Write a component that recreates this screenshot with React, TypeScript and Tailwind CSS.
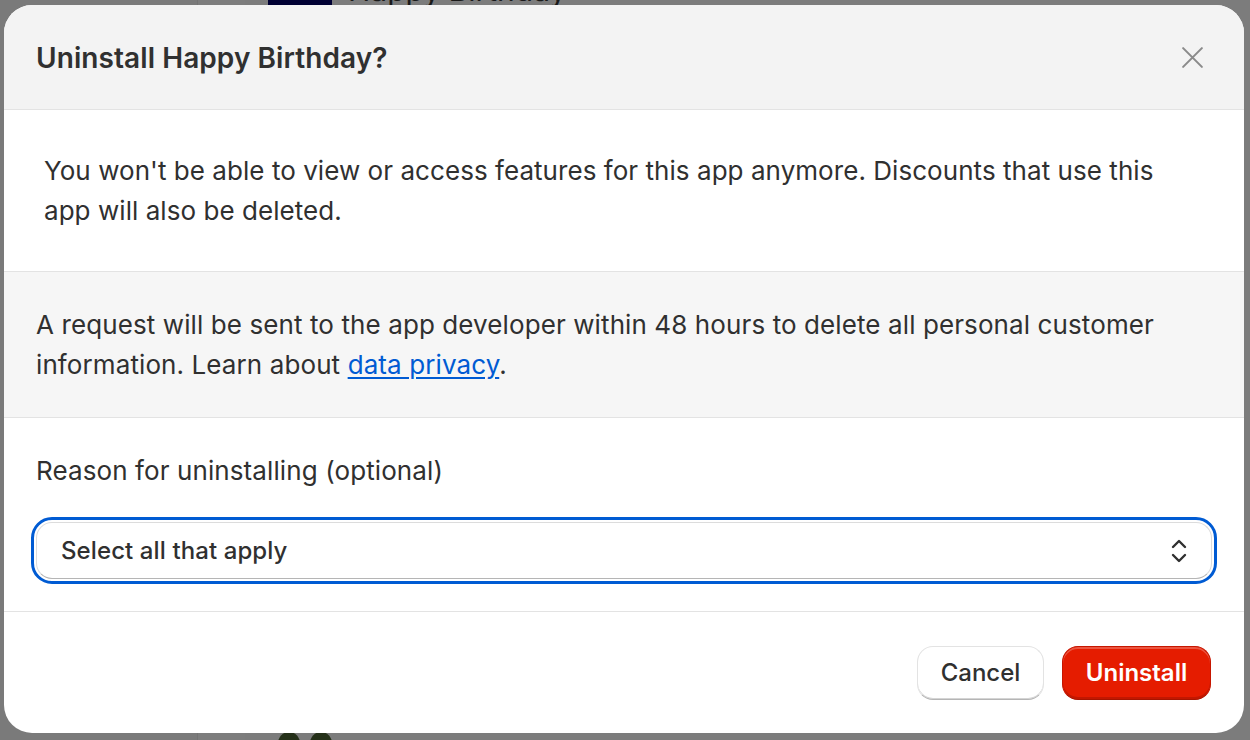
import React from "react";

export default function App() {
  return (
    <div
      className="relative w-[1250px] h-[740px] overflow-hidden bg-[#7c7c7c]"
      style={{ fontFamily: "Inter, 'Noto Sans', sans-serif" }}
    >
      {/* backdrop page (dimmed) */}
      <div className="flex h-[740px]">
        <div className="w-[197px] bg-[#7a7a7a]" />
        <div className="w-[48px] border-l border-[#737373] bg-[#7d7d7d]" />
        <div className="flex-1 pl-[23px] flex flex-col justify-between">
          <div className="flex items-start gap-[16px] -mt-[30px]">
            <div className="w-[64px] h-[42px] bg-[#000033]" />
            <div className="text-[30px] leading-[40px] text-[#1a1a1a]">Happy Birthday</div>
          </div>
          <div className="flex gap-[10px] pl-[10px] -mb-[14px]">
            <div className="w-[22px] h-[22px] rounded-full bg-[#243018]" />
            <div className="w-[22px] h-[22px] rounded-full bg-[#243018]" />
          </div>
        </div>
      </div>

      {/* modal */}
      <div className="absolute left-[4px] top-[5px] w-[1240px] h-[728px] rounded-[28px] overflow-hidden bg-white flex flex-col text-[#303030]">
        <div className="h-[105px] shrink-0 bg-[#f3f3f3] border-b border-[#e3e3e3] flex items-center justify-between pl-[32px] pr-[39px]">
          <h2 className="text-[28px] leading-[40px] font-semibold tracking-[0.08px] pt-[1px]">Uninstall Happy Birthday?</h2>
          <svg width="25" height="25" viewBox="0 0 24 24" className="text-[#8a8a8a]">
            <path d="M3 3L21 21M21 3L3 21" stroke="currentColor" strokeWidth="2" strokeLinecap="round" />
          </svg>
        </div>

        <div className="h-[162px] shrink-0 border-b border-[#e3e3e3] pl-[40px] pr-[60px] pt-[41px] text-[26px] leading-[40px] tracking-[0.05px]">
          You won't be able to view or access features for this app anymore. Discounts that use this app will also be deleted.
        </div>

        <div className="h-[146px] shrink-0 bg-[#f6f6f6] border-b border-[#e3e3e3] px-[32px] pt-[33px] text-[26px] leading-[40px] tracking-[0.1px]">
          A request will be sent to the app developer within 48 hours to delete all personal customer information. Learn about{" "}
          <a className="text-[#005bd3] underline underline-offset-[3px]">data privacy</a>.
        </div>

        <div className="h-[194px] shrink-0 border-b border-[#e3e3e3] px-[32px] pt-[33px] flex flex-col">
          <div className="text-[26px] leading-[40px] tracking-[0.1px]">Reason for uninstalling (optional)</div>
          <div className="mt-[31px] h-[57px] rounded-[16px] border border-[#dcdcdc] border-b-[#b5b5b5] outline-[3px] outline-solid outline-[#005bd3] outline-offset-[2px] flex items-center justify-between pl-[24px] pr-[22px] bg-white">
            <span className="text-[24px] font-medium tracking-[0.1px]">Select all that apply</span>
            <svg width="20" height="28" viewBox="0 0 20 28" className="text-[#303030]">
              <path d="M4 10L10 4L16 10M4 18L10 24L16 18" fill="none" stroke="currentColor" strokeWidth="2.4" strokeLinecap="round" strokeLinejoin="round" />
            </svg>
          </div>
        </div>

        <div className="flex-1 flex items-start justify-end gap-[18px] pt-[34px] pr-[33px]">
          <button className="w-[127px] h-[54px] rounded-[16px] bg-white border border-[#e3e3e3] border-b-[#b5b5b5] shadow-[inset_0_-1px_0_#d4d4d4] text-[24px] font-medium text-[#303030]">
            Cancel
          </button>
          <button className="w-[149px] h-[54px] rounded-[16px] bg-[#e51c00] border border-[#c61600] border-b-[#a81400] shadow-[inset_0_2px_0_rgba(255,255,255,0.25),inset_0_-2px_0_rgba(0,0,0,0.15)] text-[24px] font-semibold text-white">
            Uninstall
          </button>
        </div>
      </div>
    </div>
  );
}
